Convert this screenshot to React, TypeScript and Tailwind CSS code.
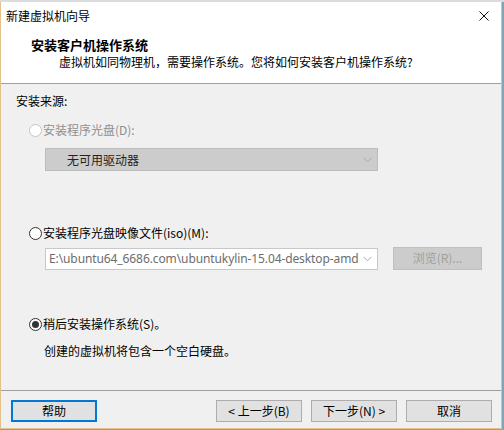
const font = { fontFamily: '"Noto Sans CJK SC", "Noto Sans", sans-serif' };

function Radio({ checked, disabled }: { checked?: boolean; disabled?: boolean }) {
  return (
    <span
      className={`flex h-[13px] w-[13px] shrink-0 items-center justify-center rounded-full border bg-white ${
        disabled ? 'border-[#c4c4c4]' : 'border-[#333333]'
      }`}
    >
      {checked && <span className="h-[7px] w-[7px] rounded-full bg-[#333333]" />}
    </span>
  );
}

function Chevron() {
  return (
    <svg width="9" height="6" viewBox="0 0 9 6" className="shrink-0">
      <path d="M0.5 0.8 L4.5 4.8 L8.5 0.8" fill="none" stroke="#a8a8a8" strokeWidth="1" />
    </svg>
  );
}

function Btn({ label, focused }: { label: string; focused?: boolean }) {
  return (
    <div
      className={`flex h-[22px] w-[86px] items-center justify-center bg-[#e1e1e1] text-[12px] text-black ${
        focused ? 'border-2 border-[#0078d7]' : 'border border-[#adadad]'
      }`}
    >
      {label}
    </div>
  );
}

export default function App() {
  return (
    <div className="relative h-[430px] w-[504px] overflow-hidden bg-[#7fa6b4]" style={font}>
      <div className="h-[2px] w-full bg-[#dcdcdc]" />
      <div className="flex h-[427px] w-[502px] flex-col border border-t-0 border-[#e4c08a] bg-[#f0f0f0]">
        {/* title bar */}
        <div className="flex h-[28px] items-center justify-between bg-white pl-[5px] pr-[12px]">
          <span className="text-[12px] leading-4 text-black">新建虚拟机向导</span>
          <svg width="10" height="10" viewBox="0 0 10 10">
            <path d="M0.5 0.5 L9.5 9.5 M9.5 0.5 L0.5 9.5" stroke="#111" strokeWidth="1" />
          </svg>
        </div>

        {/* header */}
        <div className="h-[54px] border-b border-[#a0a0a0] bg-white pt-[5px]">
          <div className="pl-[30px] text-[13px] font-bold leading-5 text-black">安装客户机操作系统</div>
          <div className="pl-[58px] text-[12px] leading-4 mt-[-1px] text-black">
            虚拟机如同物理机，需要操作系统。您将如何安装客户机操作系统?
          </div>
        </div>

        {/* body */}
        <div className="flex flex-1 flex-col pl-[15px] pt-[9px] text-[12px] leading-4 text-black">
          <div>安装来源:</div>

          <div className="mt-[13px] flex items-center gap-[1px] pl-[13px] text-[#8f8f8f]">
            <Radio disabled />
            <span>安装程序光盘(D):</span>
          </div>
          <div className="ml-[29px] mt-[10px] flex h-[23px] w-[333px] items-center justify-between border border-[#bcbcbc] bg-[#cccccc] pl-[21px] pr-[5px]">
            <span className="text-[#222]">无可用驱动器</span>
            <Chevron />
          </div>

          <div className="mt-[54px] flex items-center gap-[1px] pl-[13px]">
            <Radio />
            <span>安装程序光盘映像文件(iso)(M):</span>
          </div>
          <div className="mt-[7px] flex items-center">
            <div className="ml-[29px] flex h-[22px] w-[333px] items-center justify-between border border-[#c8c8c8] bg-white pl-[3px] pr-[5px]">
              <span
                className="w-[310px] overflow-hidden whitespace-nowrap text-[12px] tracking-[-0.1px] text-[#6d6d6d]"
                style={{ fontFamily: '"Noto Sans", sans-serif' }}
              >
                E:\ubuntu64_6686.com\ubuntukylin-15.04-desktop-amd
              </span>
              <Chevron />
            </div>
            <div className="ml-[15px] mt-[-2px] flex h-[23px] w-[89px] items-center justify-center border border-[#bfbfbf] bg-[#cccccc] text-[#a0a0a0]">
              浏览(R)...
            </div>
          </div>

          <div className="mt-[46px] flex items-center gap-[1px] pl-[13px]">
            <Radio checked />
            <span>稍后安装操作系统(S)。</span>
          </div>
          <div className="mt-[11px] pl-[28px]">创建的虚拟机将包含一个空白硬盘。</div>
        </div>

        {/* footer */}
        <div className="h-[38px] border-t border-[#a0a0a0] pt-[9px]">
          <div className="flex items-center pl-[10px]">
            <Btn label="帮助" focused />
            <div className="ml-[119px] flex gap-[9px]">
              <Btn label="< 上一步(B)" />
              <Btn label="下一步(N) >" />
              <Btn label="取消" />
            </div>
          </div>
        </div>
      </div>
    </div>
  );
}
